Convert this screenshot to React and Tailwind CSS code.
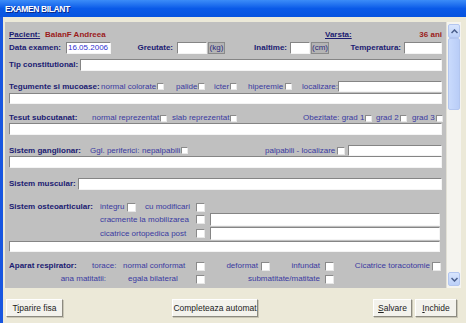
import React from "react";

const Lbl = ({ className = "", children }) => (
  <span className={"shrink-0 font-bold text-[#1b1b72] whitespace-nowrap " + className}>{children}</span>
);
const Txt = ({ className = "", children }) => (
  <span className={"shrink-0 text-[#3a3aa0] whitespace-nowrap " + className}>{children}</span>
);
const Inp = ({ className = "", children }) => (
  <div
    className={
      "bg-white border border-t-[#858585] border-l-[#858585] border-b-[#f4f4f4] border-r-[#f4f4f4] flex items-center " +
      className
    }
  >
    {children}
  </div>
);
const Cb = ({ className = "w-[7px] h-[7px]" }) => (
  <span
    className={
      "shrink-0 inline-block bg-white border border-t-[#8a8a8a] border-l-[#8a8a8a] border-b-[#e8e8e8] border-r-[#e8e8e8] " +
      className
    }
  />
);
const Big = () => <Cb className="w-[9px] h-[9px]" />;

const Btn = ({ className = "", children }) => (
  <div
    className={
      "h-[18px] flex items-center justify-center bg-[#f3f2ec] border border-t-white border-l-white border-b-[#8c8a80] border-r-[#8c8a80] shadow-[1px_1px_0_#c9c6b6] text-[8.5px] text-[#222] " +
      className
    }
  >
    {children}
  </div>
);

export default function App() {
  return (
    <div className="w-[466px] h-[323px] bg-[#ECE9D8] flex flex-col overflow-hidden font-['Liberation_Sans',Arial,sans-serif] text-[8px] leading-[10px]">
      {/* title bar */}
      <div className="h-[17px] shrink-0 bg-gradient-to-b from-[#3b8cf8] via-[#0a5ae8] to-[#0653df] flex items-center pl-[5px]">
        <span className="text-white font-bold text-[8.5px] tracking-[-0.4px] [text-shadow:1px_1px_0_#0a2a8a]">EXAMEN BILANT</span>
      </div>
      <div className="flex-1 flex border-l-[3px] border-l-[#1856e0]">
        <div className="flex flex-col pl-[2px] pt-[5px]">
          <div className="flex h-[266px]">
            {/* gray panel */}
            <div className="w-[441px] h-[266px] bg-[#c0c0c0] px-[4px] pt-[8px] flex flex-col overflow-hidden">
              {/* header */}
              <div className="flex h-[10px] items-center">
                <Lbl className="w-[36px] underline">Pacient:</Lbl>
                <span className="w-[280px] shrink-0 font-bold text-[#9b1b1b]">BalanF Andreea</span>
                <Lbl className="w-[60px] underline">Varsta:</Lbl>
                <span className="flex-1 text-right font-bold text-[#9b1b1b]">36 ani</span>
              </div>
              {/* data examen */}
              <div className="flex h-[12px] items-center mt-[2px]">
                <Lbl className="w-[57px]">Data examen:</Lbl>
                <Inp className="w-[45px] h-[12px] shrink-0 pl-[1px]">
                  <span className="text-[#2f2fd0]">16.05.2006</span>
                </Inp>
                <Lbl className="w-[66px] text-right pr-[4px]">Greutate:</Lbl>
                <Inp className="w-[30px] h-[12px] shrink-0" />
                <span className="ml-[1px] w-[17px] h-[12px] shrink-0 flex items-center justify-center bg-[#b4b4b4] border border-[#8a8a8a] text-[#2a2a7a]">(kg)</span>
                <Lbl className="w-[65px] text-right pr-[3px]">Inaltime:</Lbl>
                <Inp className="w-[20px] h-[12px] shrink-0" />
                <span className="ml-[1px] w-[18px] h-[12px] shrink-0 flex items-center justify-center bg-[#b4b4b4] border border-[#8a8a8a] text-[#2a2a7a]">(cm)</span>
                <Lbl className="w-[75px] text-right pr-[3px]">Temperatura:</Lbl>
                <Inp className="flex-1 h-[12px]" />
              </div>
              {/* tip constitutional */}
              <div className="flex h-[12px] items-center mt-[5px]">
                <Lbl className="w-[71px]">Tip constitutional:</Lbl>
                <Inp className="flex-1 h-[12px]" />
              </div>
              {/* tegumente */}
              <div className="flex h-[11px] items-center mt-[10px]">
                <Lbl className="w-[92px]">Tegumente si mucoase:</Lbl>
                <div className="w-[75px] shrink-0 flex items-center gap-[1px]"><Txt>normal colorate</Txt><Cb /></div>
                <div className="w-[38px] shrink-0 flex items-center gap-[1px]"><Txt>palide</Txt><Cb /></div>
                <div className="w-[34px] shrink-0 flex items-center gap-[1px]"><Txt>icter</Txt><Cb /></div>
                <div className="w-[54px] shrink-0 flex items-center gap-[2px]"><Txt>hiperemie</Txt><Cb /></div>
                <Txt className="w-[36px]">localizare:</Txt>
                <Inp className="flex-1 h-[11px]" />
              </div>
              <Inp className="h-[11px] mt-[1px]" />
              {/* tesut */}
              <div className="flex h-[10px] items-center mt-[9px]">
                <Lbl className="w-[83px]">Tesut subcutanat:</Lbl>
                <div className="w-[80px] shrink-0 flex items-center gap-[1px]"><Txt>normal reprezentat</Txt><Cb /></div>
                <div className="w-[131px] shrink-0 flex items-center gap-[1px]"><Txt>slab reprezentat</Txt><Cb /></div>
                <div className="w-[73px] shrink-0 flex items-center gap-[1px]"><Txt>Obezitate: grad 1</Txt><Cb /></div>
                <div className="w-[36px] shrink-0 flex items-center gap-[1px]"><Txt>grad 2</Txt><Cb /></div>
                <div className="flex-1 flex items-center gap-[1px]"><Txt>grad 3</Txt><Cb /></div>
              </div>
              <Inp className="h-[12px]" />
              {/* ganglionar */}
              <div className="flex h-[11px] items-center mt-[10px]">
                <Lbl className="w-[81px]">Sistem ganglionar:</Lbl>
                <Txt className="w-[52px]">Ggl. periferici:</Txt>
                <div className="w-[123px] shrink-0 flex items-center gap-[1px]"><Txt>nepalpabili</Txt><Cb /></div>
                <div className="w-[83px] shrink-0 flex items-center gap-[2px]"><Txt>palpabili - localizare</Txt><Cb className="w-[8px] h-[8px]" /></div>
                <Inp className="flex-1 h-[11px]" />
              </div>
              <Inp className="h-[12px]" />
              {/* muscular */}
              <div className="flex h-[12px] items-center mt-[10px]">
                <Lbl className="w-[69px]">Sistem muscular:</Lbl>
                <Inp className="flex-1 h-[12px]" />
              </div>
              {/* osteoarticular */}
              <div className="flex h-[10px] items-center mt-[12px]">
                <Lbl className="w-[91px]">Sistem osteoarticular:</Lbl>
                <div className="w-[45px] shrink-0 flex items-center gap-[3px]"><Txt>integru</Txt><Big /></div>
                <Txt className="w-[51px]">cu modificari</Txt>
                <Big />
              </div>
              <div className="flex h-[13px] items-center mt-[1px] pr-[2px]">
                <span className="w-[91px] shrink-0" />
                <Txt className="w-[96px]">cracmente la mobilizarea</Txt>
                <Big />
                <Inp className="flex-1 h-[13px] ml-[5px]" />
              </div>
              <div className="flex h-[13px] items-center mt-[1px] pr-[2px]">
                <span className="w-[91px] shrink-0" />
                <Txt className="w-[96px]">cicatrice ortopedica post</Txt>
                <Big />
                <Inp className="flex-1 h-[13px] ml-[5px]" />
              </div>
              <Inp className="h-[11px] mt-[1px] mr-[2px]" />
              {/* aparat respirator */}
              <div className="flex h-[10px] items-center mt-[9px]">
                <Lbl className="w-[83px]">Aparat respirator:</Lbl>
                <Txt className="w-[31px]">torace:</Txt>
                <Txt className="w-[73px]">normal conformat</Txt>
                <Big />
                <Txt className="w-[56px] text-right pr-[3px]">deformat</Txt>
                <Big />
                <Txt className="w-[55px] text-right pr-[5px]">infundat</Txt>
                <Big />
                <Txt className="w-[98px] text-right pr-[2px]">Cicatrice toracotomie</Txt>
                <Big />
              </div>
              <div className="flex h-[10px] items-center mt-[3px]">
                <Txt className="w-[97px] text-right">ana matitatii:</Txt>
                <Txt className="w-[90px] pl-[22px]">egala bilateral</Txt>
                <Big />
                <Txt className="w-[120px] text-right pr-[5px]">submatitate/matitate</Txt>
                <Big />
              </div>
            </div>
            {/* scrollbar */}
            <div className="w-[15px] h-[266px] bg-[#f5f4ef] flex flex-col pt-[2px] border-l border-l-[#e2e0d6]">
              <div className="h-[14px] mx-[1px] rounded-[2px] bg-gradient-to-b from-[#d8e5fd] to-[#bcd0f8] border border-[#b3c6ef] flex items-center justify-center">
                <svg width="7" height="5" viewBox="0 0 7 5"><path d="M0.5 4 L3.5 1 L6.5 4" stroke="#4a5f8c" strokeWidth="1.5" fill="none" /></svg>
              </div>
              <div className="h-[72px] mx-[1px] rounded-[2px] bg-gradient-to-r from-[#c9dafc] to-[#b9cdf7] border border-[#b3c6ef]" />
              <div className="flex-1" />
              <div className="h-[14px] mx-[1px] mb-[2px] rounded-[2px] bg-gradient-to-b from-[#d8e5fd] to-[#bcd0f8] border border-[#b3c6ef] flex items-center justify-center">
                <svg width="7" height="5" viewBox="0 0 7 5"><path d="M0.5 1 L3.5 4 L6.5 1" stroke="#4a5f8c" strokeWidth="1.5" fill="none" /></svg>
              </div>
            </div>
          </div>
          {/* bottom buttons */}
          <div className="flex pt-[11px] pl-[1px]">
            <Btn className="w-[57px]">
              <span>T<span className="underline">i</span>parire fisa</span>
            </Btn>
            <Btn className="w-[86px] ml-[109px]">Completeaza automat</Btn>
            <Btn className="w-[39px] ml-[115px]">
              <span><span className="underline">S</span>alvare</span>
            </Btn>
            <Btn className="w-[42px] ml-[3px]">
              <span><span className="underline">I</span>nchide</span>
            </Btn>
          </div>
        </div>
      </div>
    </div>
  );
}
